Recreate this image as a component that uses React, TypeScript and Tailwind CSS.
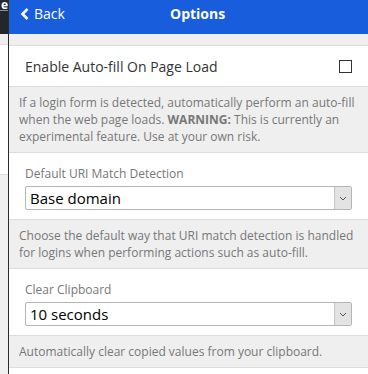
import React from 'react'

function Chevron() {
  return (
    <svg width="8" height="5" viewBox="0 0 8 5" className="text-[#555]">
      <path d="M1 1 L4 4 L7 1" fill="none" stroke="currentColor" strokeWidth="1" />
    </svg>
  )
}

function FakeSelect({ value }: { value: string }) {
  return (
    <div className="flex h-[24px] w-full items-stretch rounded-[2px] border border-[#b5b5b5] bg-white">
      <div className="flex flex-1 items-center pl-[4px] text-[15px] leading-none text-black">{value}</div>
      <div className="flex w-[17px] items-center justify-center border-l border-[#c4c4c4] bg-[#e3e3e3]">
        <Chevron />
      </div>
    </div>
  )
}

function SelectSection({ label, value }: { label: string; value: string }) {
  return (
    <div className="border-b border-[#dddddd] bg-white px-[16px] pt-[13px] pb-[9px]">
      <div className="mb-[5px] text-[12px] leading-[15px] text-[#777777]">{label}</div>
      <FakeSelect value={value} />
    </div>
  )
}

function Note({ children }: { children: React.ReactNode }) {
  return (
    <div className="border-b border-[#dddddd] bg-[#efefef] px-[10px] py-[7px] text-[12px] leading-[17px] text-[#777777]">
      {children}
    </div>
  )
}

export default function App() {
  return (
    <div
      className="flex h-[374px] w-[368px] overflow-hidden bg-white"
      style={{ fontFamily: '"Open Sans", "Noto Sans", sans-serif' }}
    >
      {/* window behind, left edge */}
      <div className="flex w-[8px] flex-col">
        <div className="h-[34px] bg-[#23272a]">
          <div className="h-[11px] overflow-hidden border-b border-[#8a8d90] text-right text-[12px] font-bold leading-[9px] text-white">e</div>
        </div>
        <div className="h-[11px] border-b border-[#dddddd] bg-[#efefef]" />
        <div className="h-[129px] bg-white" />
        <div className="flex-1 border-t border-[#dddddd] bg-[#f0f0f0]" />
      </div>

      <div className="flex w-[360px] flex-col border-l border-[#2b2b2b]">
        <div className="flex h-[34px] shrink-0 items-start bg-[#175ddc] pt-[5px] text-white">
          <div className="flex w-[161px] items-center gap-[4px] pl-[11px] text-[14px] leading-[18px]">
            <svg width="10" height="12" viewBox="0 0 10 12">
              <path d="M7.5 1 L2.5 6 L7.5 11" fill="none" stroke="white" strokeWidth="2.6" />
            </svg>
            <span>Back</span>
          </div>
          <div className="text-[14px] font-bold leading-[18px]">Options</div>
        </div>

        <div className="h-[12px] shrink-0 border-b border-[#dddddd] bg-[#efefef]" />

        <div className="flex h-[41px] shrink-0 items-center justify-between border-b border-[#dddddd] bg-white px-[16px]">
          <span className="text-[14px] text-[#333333]">Enable Auto-fill On Page Load</span>
          <div className="h-[13px] w-[13px] border-[1.5px] border-[#333333] bg-white" />
        </div>

        <Note>
          If a login form is detected, automatically perform an auto-fill when the web page loads.{' '}
          <b className="font-bold">WARNING:</b> This is currently an experimental feature. Use at your own risk.
        </Note>

        <SelectSection label="Default URI Match Detection" value="Base domain" />

        <Note>
          Choose the default way that URI match detection is handled for logins when performing actions such as
          auto-fill.
        </Note>

        <SelectSection label="Clear Clipboard" value="10 seconds" />

        <Note>Automatically clear copied values from your clipboard.</Note>
      </div>
    </div>
  )
}
